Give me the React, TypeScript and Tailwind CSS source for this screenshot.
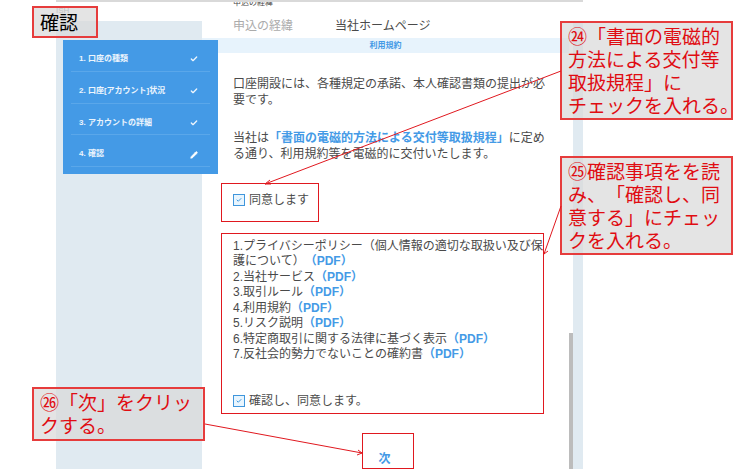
import type { ReactNode } from "react";
import { Check, Pencil } from "lucide-react";

const steps = [
  { label: "1. 口座の種類", done: true },
  { label: "2. 口座[アカウント]状況", done: true },
  { label: "3. アカウントの詳細", done: true },
  { label: "4. 確認", done: false },
];

const documents = [
  <>1.プライバシーポリシー（個人情報の適切な取扱い及び保<br />護について）</>,
  "2.当社サービス",
  "3.取引ルール",
  "4.利用規約",
  "5.リスク説明",
  "6.特定商取引に関する法律に基づく表示",
  "7.反社会的勢力でないことの確約書",
];

function Consent({ id, children }: { id: string; children: ReactNode }) {
  return (
    <div className="flex items-center gap-1">
      <span className="relative flex size-3">
        <input
          id={id}
          type="checkbox"
          defaultChecked
          className="size-3 appearance-none border border-[#3f96dc] bg-[#e8f5fe]"
        />
        <Check className="pointer-events-none absolute top-[3px] left-[3px] size-1.5 text-[#3f96dc]" strokeWidth={4} />
      </span>
      <label htmlFor={id} className="leading-4">{children}</label>
    </div>
  );
}

function Callout({ className, children }: { className: string; children: ReactNode }) {
  return (
    <div
      className={`absolute border-2 border-[#e63c3c] bg-[#d9d9d9]/70 px-1.5 text-[19px] leading-[23px] whitespace-nowrap ${className}`}
    >
      {children}
    </div>
  );
}

export default function App() {
  return (
    <div className="relative min-h-screen overflow-hidden bg-white pr-[167px] pl-14 font-['Liberation_Sans','Noto_Sans_CJK_JP',sans-serif] text-xs text-[#4a4a4a] [text-spacing-trim:space-all]">
      <div className="flex min-h-screen border-t-2 border-[#d9d9d9]">
        <aside className="flex w-[146px] shrink-0 flex-col">
          <p className="h-[19px] pt-1 text-[8px] leading-[10px] text-[#8a8a8a]">ISH</p>
          <div className="flex-1 bg-[#e0eaf1] pt-[19px] pl-[7px]">
            <nav className="relative z-10 h-[134px] w-[155px] bg-[#449ae6] px-2 text-[8px] font-bold text-white/90">
              <ol className="grid h-[127px] grid-rows-4">
                {steps.map((step) => (
                  <li key={step.label} className="flex items-center justify-between border-b border-[#5aa7ea] pt-2 pr-3 pl-2">
                    <a href="#step">{step.label}</a>
                    {step.done ? (
                      <Check className="size-2" strokeWidth={4} />
                    ) : (
                      <Pencil className="size-2 fill-white" strokeWidth={2} />
                    )}
                  </li>
                ))}
              </ol>
            </nav>
          </div>
        </aside>

        <main className="min-w-0 flex-1 whitespace-nowrap">
          <div className="flex h-[5px] items-end overflow-hidden pl-[31px] text-[8px] leading-none">申込の経緯</div>
          <dl className="mt-[11px] mb-1 flex pl-[31px] leading-4">
            <dt className="w-[102px] text-[#ababab]">申込の経緯</dt>
            <dd>当社ホームページ</dd>
          </dl>
          <h2 className="h-[15px] bg-[#e7f3fc] text-center text-[8px] leading-[15px] font-bold text-[#449ae6]">利用規約</h2>

          <div className="pl-[19px]">
            <p className="mt-[23px] pl-3 leading-4">
              口座開設には、各種規定の承諾、本人確認書類の提出が必
              <br />
              要です。
            </p>
            <p className="mt-[22px] pl-3 leading-4">
              当社は
              <a href="#rules" className="font-bold text-[#449ae6]">「書面の電磁的方法による交付等取扱規程」</a>
              に定め
              <br />
              る通り、利用規約等を電磁的に交付いたします。
            </p>

            <div className="mt-[21px] flex h-[39px] w-[98px] items-center border border-[#e0181f] pb-1.5 pl-[11px]">
              <Consent id="agree">同意します</Consent>
            </div>

            <section className="mt-[11px] mr-[25px] flex h-[181px] flex-col justify-between border border-[#e0181f] pt-[5px] pb-1 pl-[11px]">
              <ol className="flex h-[123px] flex-col justify-between leading-[15px]">
                {documents.map((title, i) => (
                  <li key={i}>
                    {title}
                    <a href="#pdf" className="font-bold text-[#449ae6]">（PDF）</a>
                  </li>
                ))}
              </ol>
              <Consent id="confirm">確認し、同意します。</Consent>
            </section>
          </div>

          <div className="mt-[19px] flex justify-center pl-1">
            <button type="button" className="h-9 w-[52px] border border-[#e0181f] pt-4 pr-1.5 text-xs font-bold text-[#449ae6]">次</button>
          </div>
        </main>

        <div className="flex w-1 shrink-0 flex-col justify-end">
          <div className="h-[136px] bg-[#bcbcbc]" />
        </div>
        <div className="mt-[19px] w-2.5 shrink-0 bg-[#e0eaf1]" />
      </div>

      <svg className="pointer-events-none absolute top-0 left-0 z-10" width="750" height="469" fill="none" stroke="#e0181f" aria-hidden="true">
        <path d="M561 71 265 184M270 180l-5 4 6 0" />
        <path d="M561 206 544 254M543 249l1 5 4-3" />
        <path d="M205 424 362 453M358 450l4 3-5 2" />
      </svg>

      <Callout className="top-1.5 left-8 z-10 h-8 w-[66px] leading-[31px] text-black">確認</Callout>
      <Callout className="top-[21px] left-[560px] h-[99px] w-[173px] pt-[3px] text-[#e00c12]">
        ㉔「書面の電磁的<br />方法による交付等<br />取扱規程」に<br />チェックを入れる。
      </Callout>
      <Callout className="top-[156px] left-[560px] h-[99px] w-[173px] pt-[3px] text-[#e00c12]">
        ㉕確認事項をを読<br />み、「確認し、同<br />意する」にチェッ<br />クを入れる。
      </Callout>
      <Callout className="top-[387px] left-8 h-[54px] w-[173px] pt-[3px] text-[#e00c12]">
        ㉖「次」をクリッ<br />クする。
      </Callout>
    </div>
  );
}
